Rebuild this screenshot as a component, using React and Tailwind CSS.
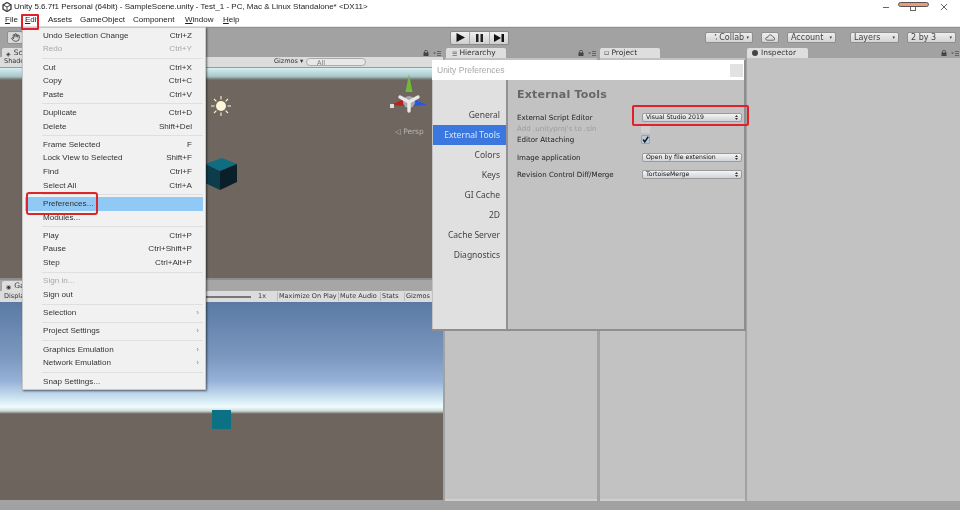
import { Hand } from "lucide-react";

const menu = [
  ["Undo Selection Change", "Ctrl+Z"], ["Redo", "Ctrl+Y", "d"], 0,
  ["Cut", "Ctrl+X"], ["Copy", "Ctrl+C"], ["Paste", "Ctrl+V"], 0,
  ["Duplicate", "Ctrl+D"], ["Delete", "Shift+Del"], 0,
  ["Frame Selected", "F"], ["Lock View to Selected", "Shift+F"], ["Find", "Ctrl+F"], ["Select All", "Ctrl+A"], 0,
  ["Preferences...", "", "h"], ["Modules...", ""], 0,
  ["Play", "Ctrl+P"], ["Pause", "Ctrl+Shift+P"], ["Step", "Ctrl+Alt+P"], 0,
  ["Sign in...", "", "d"], ["Sign out", ""], 0,
  ["Selection", ">"], 0, ["Project Settings", ">"], 0,
  ["Graphics Emulation", ">"], ["Network Emulation", ">"], 0,
  ["Snap Settings...", ""],
];
const side = ["General", "External Tools", "Colors", "Keys", "GI Cache", "2D", "Cache Server", "Diagnostics"];

function ToolBtn({ className, children }) {
  return (
    <div className={"h-[11px] flex items-center justify-between px-[3px] rounded-[2px] border border-[#8f8f8f] bg-[linear-gradient(#eeeeee,#d4d4d4)] text-[8px] text-[#444] font-['DejaVu_Sans'] " + className}>
      {children}
    </div>
  );
}
function PanelIcons({ className }) {
  return (
    <div className={"flex items-center gap-[4px] " + className}>
      <svg width="6" height="6" viewBox="0 0 6 6"><rect x="0.5" y="2.5" width="5" height="3.5" fill="#444" /><path d="M1.5 3V1.5a1.5 1.2 0 013 0V3" fill="none" stroke="#444" strokeWidth="0.8" /></svg>
      <svg width="8" height="5" viewBox="0 0 8 5"><path d="M0 1.5L1.5 3 3 1.5" fill="#555" /><path d="M4 .5h4M4 2.5h4M4 4.5h4" stroke="#555" strokeWidth="0.8" /></svg>
    </div>
  );
}
function Tab({ className, children }) {
  return <div className={"h-[10px] mt-px flex items-center whitespace-nowrap overflow-hidden rounded-t-[2px] bg-[#dedede] text-[7.5px] text-[#333] font-['DejaVu_Sans'] " + className}>{children}</div>;
}
function Popup({ label }) {
  return (
    <div className="ml-px w-[100px] h-[9px] px-[3px] flex items-center justify-between rounded-[2px] border border-[#9a9a9a] bg-[linear-gradient(#f4f4f4,#cfd4d9)] text-[6.2px] leading-none text-[#111] font-['DejaVu_Sans'] whitespace-nowrap">
      <span>{label}</span>
      <svg width="3" height="5" viewBox="0 0 3 5"><path d="M0 2h3L1.5 0zM0 3h3L1.5 5z" fill="#333" /></svg>
    </div>
  );
}
function PrefRow({ label, className, children, muted }) {
  return (
    <div className={"flex items-center h-[11px] " + className}>
      <span className={"w-[124px] text-[7.1px] leading-none font-['DejaVu_Sans'] whitespace-nowrap " + (muted ? "text-[#9c9c9c]" : "text-[#222]")}>{label}</span>
      {children}
    </div>
  );
}

export default function App() {
  return (
    <div className="relative w-[960px] h-[510px] overflow-hidden flex flex-col bg-[#a2a2a2] font-['Liberation_Sans',sans-serif] blur-[0.4px]">
      {/* title bar */}
      <div className="h-[14px] bg-white flex items-center text-[8px] text-[#222]">
        <svg className="ml-[2px]" width="10" height="10" viewBox="0 0 10 10"><path d="M5 .5L9 2.8V7.2L5 9.5 1 7.2V2.8z" fill="none" stroke="#444" strokeWidth="1.4" /><path d="M5 5V9M5 5L1 2.8M5 5l4-2.2" stroke="#444" strokeWidth="1" /></svg>
        <span className="ml-[2px] whitespace-nowrap">{"Unity 5.6.7f1 Personal (64bit) - SampleScene.unity - Test_1 - PC, Mac & Linux Standalone* <DX11>"}</span>
        <div className="ml-auto flex items-center">
          <span className="w-[6px] h-px bg-[#666] mr-[21px]" />
          <span className="w-[6px] h-[6px] border border-[#666] mt-[2px] mr-[24px]" />
          <svg className="mr-[12px]" width="8" height="8" viewBox="0 0 8 8"><path d="M1 1l6 6M7 1L1 7" stroke="#555" strokeWidth="0.9" /></svg>
        </div>
      </div>
      {/* menu bar */}
      <div className="h-[13px] bg-white border-b border-[#e8e8e8] flex items-center text-[8px] text-[#222] whitespace-nowrap">
        <span className="ml-[5px] w-[20px]"><u>F</u>ile</span>
        <span className="w-[23px]"><u>E</u>dit</span>
        <span className="w-[32px]">Assets</span>
        <span className="w-[53px]">GameObject</span>
        <span className="w-[52px]">Component</span>
        <span className="w-[38px]"><u>W</u>indow</span>
        <span><u>H</u>elp</span>
      </div>
      {/* toolbar */}
      <div className="h-[20px] bg-[#a2a2a2] flex items-center border-t border-[#8e8e8e]">
        <div className="ml-[7px] w-[16px] h-[13px] flex items-center justify-center rounded-[2px] border border-[#8f8f8f] bg-[#d8d8d8]"><Hand size={9} color="#333" /></div>
        <div className="ml-[427px] w-[59px] h-[14px] flex rounded-[2px] border border-[#8a8a8a] bg-[linear-gradient(#f0f0f0,#cfcfcf)]">
          <div className="flex-1 flex items-center justify-center border-r border-[#a8a8a8]"><svg width="9" height="9" viewBox="0 0 9 9"><path d="M.5 0L9 4.5.5 9z" fill="#111" /></svg></div>
          <div className="flex-1 flex items-center justify-center border-r border-[#a8a8a8]"><svg width="7" height="8" viewBox="0 0 7 8"><path d="M0 0h2.5v8H0zM4.5 0H7v8H4.5z" fill="#222" /></svg></div>
          <div className="flex-1 flex items-center justify-center"><svg width="10" height="8" viewBox="0 0 10 8"><path d="M0 0l7 4-7 4zM7.5 0H10v8H7.5z" fill="#111" /></svg></div>
        </div>
        <ToolBtn className="ml-[196px] w-[48px]">
          <svg width="8" height="8" viewBox="0 0 8 8"><path d="M6.8 2.5A3.2 3.2 0 104 .8" fill="none" stroke="#555" strokeWidth="1" transform="rotate(40 4 4)" /></svg>
          <span>Collab</span><span className="text-[5px]">▾</span>
        </ToolBtn>
        <ToolBtn className="ml-[8px] w-[18px] !justify-center">
          <svg width="11" height="7" viewBox="0 0 11 7"><path d="M2.5 6.5h6.5a1.6 1.6 0 000-3.2C8.5 1.5 7 .5 5.5.7 4 1 3.4 2 3.2 3.2 1.8 3 .6 4 .8 5.2c.2.8.8 1.3 1.7 1.3z" fill="none" stroke="#444" strokeWidth="0.8" /></svg>
        </ToolBtn>
        <ToolBtn className="ml-[8px] w-[49px]"><span>Account</span><span className="text-[5px]">▾</span></ToolBtn>
        <ToolBtn className="ml-[14px] w-[49px]"><span>Layers</span><span className="text-[5px]">▾</span></ToolBtn>
        <ToolBtn className="ml-[8px] w-[49px]"><span>2 by 3</span><span className="text-[5px]">▾</span></ToolBtn>
      </div>
      {/* main */}
      <div className="h-[454px] flex">
        <div className="w-[443px] flex flex-col">
          {/* scene */}
          <div className="h-[10px] flex relative">
            <Tab className="ml-[2px] w-[40px] pl-[4px]"><span className="mr-[3px] text-[6px]">◈</span>Scene</Tab>
            <PanelIcons className="absolute right-[2px] top-[3px]" />
          </div>
          <div className="h-[11px] bg-[#dcdcdc] flex items-center text-[6.5px] text-[#333] font-['DejaVu_Sans'] border-b border-[#9a9a9a] whitespace-nowrap">
            <span className="ml-[4px] w-[25px]">Shaded</span>
            <span className="ml-[245px] w-[29px]">Gizmos ▾</span>
            <span className="ml-[3px] pl-[10px] w-[60px] h-[8px] leading-[8px] rounded-[4px] border border-[#aaa] bg-[#e8e8e8] text-[#777]">All</span>
          </div>
          <div className="h-[210px] relative bg-[#6f6660] overflow-hidden">
            <div className="h-[12px] bg-[linear-gradient(#d8eff1,#a7c8cb_70%,#6f6660)]" />
            {/* sun */}
            <svg className="absolute left-[211px] top-[28px]" width="20" height="20" viewBox="0 0 20 20">
              <circle cx="10" cy="10" r="5" fill="#fff6d8" />
              <g stroke="#fff3cf" strokeWidth="1.1">
                <path d="M10 0v3.5M10 16.5V20M0 10h3.5M16.5 10H20M3 3l2.4 2.4M14.6 14.6L17 17M3 17l2.4-2.4M14.6 5.4L17 3" />
              </g>
            </svg>
            {/* gizmo */}
            <svg className="absolute left-[386px] top-[4px]" width="46" height="50" viewBox="0 0 46 50">
              <path d="M23 2l-3.5 18h7z" fill="#72b83a" />
              <path d="M5 33l13-6 1 7z" fill="#b6241e" />
              <path d="M41 33l-13-6-1 7z" fill="#2a58d8" />
              <circle cx="23" cy="30" r="6" fill="#a8a8a8" />
              <path d="M23 30l-9-5M23 30l9-5M23 30v9" stroke="#e8e8e8" strokeWidth="3.4" strokeLinecap="round" />
              <rect x="4" y="32" width="4" height="4" fill="#ddd" />
            </svg>
            <span className="absolute left-[395px] top-[60px] text-[7.5px] leading-none text-[#b9b4b0] font-['DejaVu_Sans'] whitespace-nowrap">◁ Persp</span>
            {/* cube */}
            <svg className="absolute left-[190px] top-[86px]" width="50" height="40" viewBox="0 0 50 40">
              <path d="M15 10l17-6 15 6-17 7z" fill="#0f6d82" />
              <path d="M15 10l15 7v19l-15-7z" fill="#0d3c4a" />
              <path d="M30 17l17-7v18l-17 8z" fill="#0a1f27" />
            </svg>
          </div>
          {/* game */}
          <div className="h-[2px] bg-[#8e8e8e]" />
          <div className="h-[11px] flex bg-[#a6a6a6]">
            <Tab className="ml-[2px] w-[40px] pl-[4px]"><span className="mr-[3px] text-[6px]">◉</span>Game</Tab>
          </div>
          <div className="h-[11px] bg-[#dcdcdc] flex items-center text-[6.5px] text-[#333] font-['DejaVu_Sans'] whitespace-nowrap">
            <span className="ml-[4px] w-[30px]">Display 1</span>
            <span className="ml-[171px] w-[46px] h-[2px] bg-[#777]" />
            <span className="ml-[7px] w-[19px]">1x</span>
            <span className="w-[61px] border-l border-[#bbb] pl-px">Maximize On Play</span>
            <span className="w-[42px] border-l border-[#bbb] pl-px">Mute Audio</span>
            <span className="w-[24px] border-l border-[#bbb] pl-px">Stats</span>
            <span className="border-l border-[#bbb] pl-px">Gizmos</span>
          </div>
          <div className="h-[198px] relative bg-[linear-gradient(#5a7aa4_0%,#7b98bf_28%,#97b2d8_40%,#c9e0ef_48%,#f0fdff_53%,#cfdcd9_55%,#6f655f_56.5%,#6e645e_100%)]">
            <div className="absolute left-[212px] top-[108px] w-[19px] h-[19px] bg-[#0d7186]" />
          </div>
          <div className="flex-1" />
        </div>
        {/* hierarchy */}
        <div className="ml-[2px] w-[152px] flex flex-col relative">
          <Tab className="ml-px w-[60px] pl-[6px]"><span className="mr-[2px] text-[6px]">☰</span>Hierarchy</Tab>
          <PanelIcons className="absolute right-[1px] top-[3px]" />
          <div className="flex-1 bg-[#c2c2c2] border-b-2 border-[#cfcfcf]" />
        </div>
        {/* project */}
        <div className="ml-[3px] w-[145px] flex flex-col relative">
          <Tab className="w-[60px] pl-[4px]">▫ Project</Tab>
          <div className="flex-1 bg-[#c2c2c2] border-b-2 border-[#cfcfcf]" />
        </div>
        {/* inspector */}
        <div className="ml-[2px] flex-1 flex flex-col relative">
          <Tab className="w-[61px] pl-[5px]"><span className="mr-[3px] w-[6px] h-[6px] rounded-full bg-[#444]" />Inspector</Tab>
          <PanelIcons className="absolute right-[1px] top-[3px]" />
          <div className="flex-1 bg-[#c2c2c2]" />
        </div>
      </div>

      {/* Edit menu */}
      <div className="absolute left-[22px] top-[27px] w-[184px] h-[363px] bg-[#f1f1f1] border border-[#c8c8c8] shadow-[1px_1px_2px_rgba(0,0,0,0.55)] pt-px px-[2px] text-[8.1px] text-[#333] whitespace-nowrap">
        {menu.map((m, i) =>
          m === 0 ? (
            <div key={i} className="h-[4.68px] flex items-center pl-[17px]"><div className="w-full h-px bg-[#dfdfdf]" /></div>
          ) : (
            <div key={i} className={"h-[13.6px] flex items-center justify-between pl-[18px] pr-[11px] " + (m[2] === "h" ? "bg-[#90c8f6] " : "") + (m[2] === "d" ? "text-[#a8a8a8]" : "")}>
              <span>{m[0]}</span>
              {m[1] === ">" ? <span className="-mr-[7px] text-[#888]">›</span> : <span>{m[1]}</span>}
            </div>
          )
        )}
      </div>

      {/* Preferences dialog */}
      <div className="absolute left-[432px] top-[60px] w-[314px] h-[271px] flex flex-col border-b-2 border-r-2 border-[#8e8e8e] bg-[#c2c2c2]">
        <div className="h-[20px] bg-white flex items-center justify-between text-[8.5px] text-[#a8a8a8] pl-[5px]">
          <span>Unity Preferences</span>
          <div className="w-[13px] h-[13px] bg-[#e2e2e2] mr-px" />
        </div>
        <div className="flex-1 flex">
          <div className="w-[75px] ml-px bg-[#e0e0e0] pt-[25px] border-r-2 border-[#929292] text-[8.5px] text-[#444] whitespace-nowrap font-['Noto_Sans']">
            {side.map((s) => (
              <div key={s} className={"h-[20px] flex items-center justify-end pr-[6px] " + (s === "External Tools" ? "bg-[#3a78e0] text-[#d8e6fb]" : "")}>{s}</div>
            ))}
          </div>
          <div className="flex-1 pl-[9px] pt-[8px] font-['DejaVu_Sans']">
            <div className="h-[14px] leading-[14px] text-[11px] font-bold text-[#666] tracking-[0.2px] whitespace-nowrap">External Tools</div>
            <div className="mt-[10px]">
              <PrefRow label="External Script Editor"><Popup label="Visual Studio 2019" /></PrefRow>
              <PrefRow label="Add .unityproj's to .sln" muted><span className="w-[9px] h-[9px] rounded-[1px] bg-[#cfcfcf]" /></PrefRow>
              <PrefRow label="Editor Attaching">
                <span className="w-[9px] h-[9px] rounded-[1px] bg-[#b9c8d9] border border-[#9aa5b0] flex items-center justify-center">
                  <svg width="9" height="9" viewBox="0 0 9 9"><path d="M1.5 4.5L3.5 7.5 8 1" fill="none" stroke="#0e1a28" strokeWidth="1.9" /></svg>
                </span>
              </PrefRow>
              <PrefRow label="Image application" className="mt-[7px]"><Popup label="Open by file extension" /></PrefRow>
              <PrefRow label="Revision Control Diff/Merge" className="mt-[6px]"><Popup label="TortoiseMerge" /></PrefRow>
            </div>
          </div>
        </div>
      </div>

      {/* annotations */}
      <div className="absolute left-[21px] top-[14px] w-[18px] h-[16px] border-2 border-[#e0202a] rounded-[1px]" />
      <div className="absolute left-[26px] top-[192px] w-[72px] h-[23px] border-2 border-[#d8282c] rounded-[3px]" />
      <div className="absolute left-[632px] top-[105px] w-[117px] h-[21px] border-2 border-[#e0202a] rounded-[2px]" />
      <div className="absolute left-[898px] top-[2px] w-[31px] h-[5px] rounded-full border border-[#555] bg-[#ee9a78]" />
    </div>
  );
}
